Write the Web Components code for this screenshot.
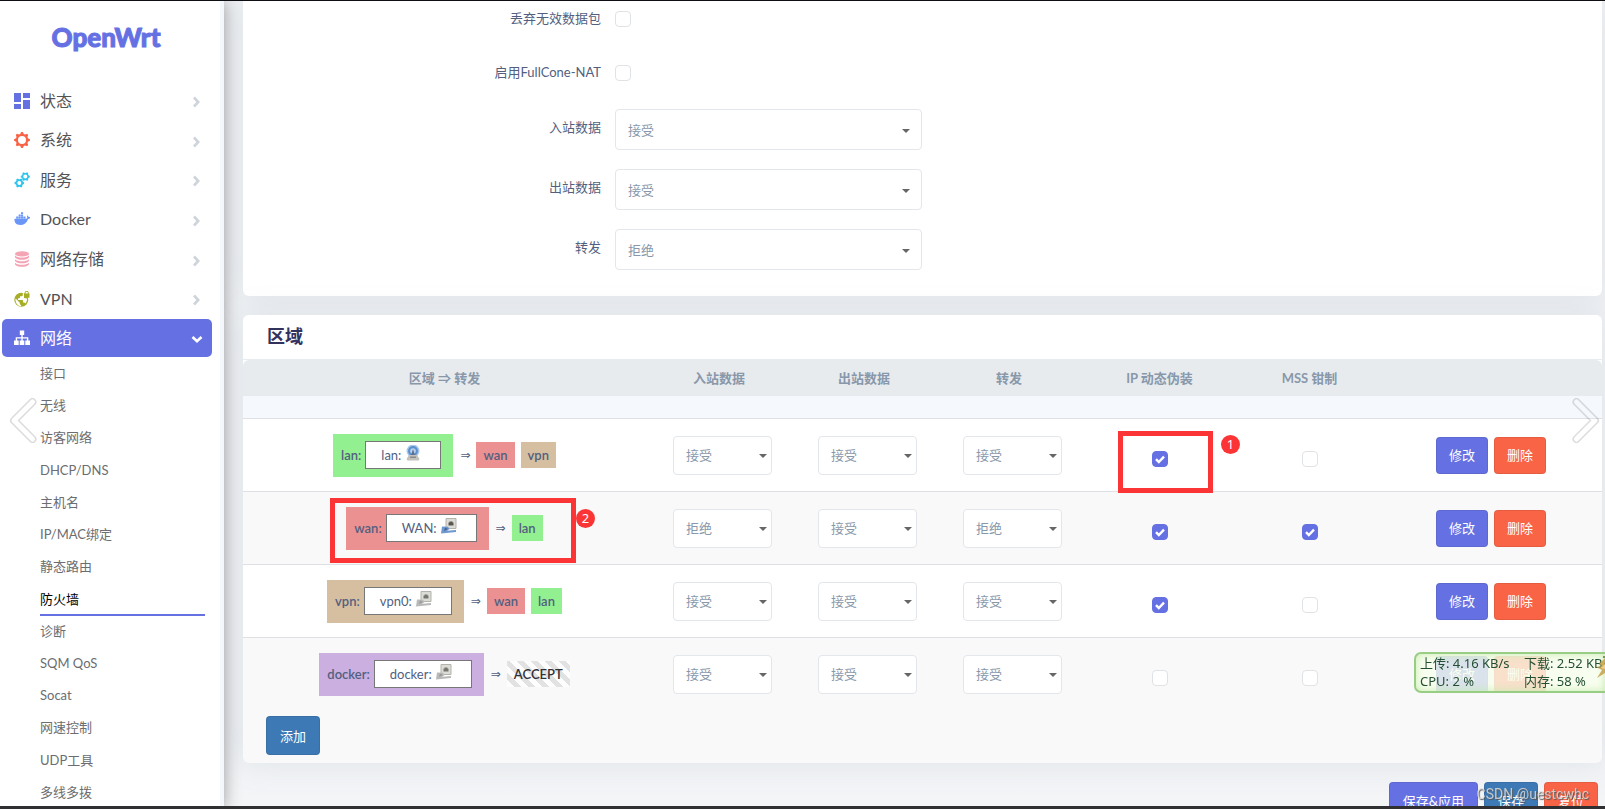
<!DOCTYPE html>
<html lang="zh-CN">
<head>
<meta charset="utf-8">
<meta name="viewport" content="width=device-width, initial-scale=1">
<title>OpenWrt - 防火墙</title>
<style>
  :root {
    --primary: #6571e3;
    --danger: #f96446;
    --info: #3c79b5;
    --text: #525f7f;
    --muted: #8898aa;
  }
  html, body { margin: 0; height: 100%; overflow: hidden; }
  body { font: 13px/20px Lato, "Noto Sans CJK SC", sans-serif; color: var(--text); }
</style>
</head>
<body>
<router-app></router-app>
<script>
const define = (name, render, setup) => customElements.define(name, class extends HTMLElement {
  connectedCallback() {
    if (this.shadowRoot) return;
    const root = this.attachShadow({ mode: 'open' });
    root.innerHTML = '<style>*{box-sizing:border-box}</style>' + render(this);
    if (setup) setup(this, root);
  }
});

const gear = (cx, cy, r, hole, teeth) => {
  let d = '';
  const n = teeth * 4, inner = r * 0.78;
  for (let i = 0; i < n; i++) {
    const a = (i - 0.5) * 2 * Math.PI / n;
    const rad = (i % 4 < 2) ? r : inner;
    d += (i ? 'L' : 'M') + (cx + rad * Math.cos(a)).toFixed(2) + ' ' + (cy + rad * Math.sin(a)).toFixed(2);
  }
  return d + `ZM${cx - hole} ${cy}a${hole} ${hole} 0 1 0 ${2 * hole} 0a${hole} ${hole} 0 1 0 ${-2 * hole} 0Z`;
};

const icons = {
  status: '<path fill="#6571e3" d="M0 0h7v9H0zM9 0h7v5H9zM0 11h7v5H0zM9 7h7v9H9z"/>',
  system: `<path fill="#f96446" fill-rule="evenodd" d="${gear(8, 8, 8, 4, 8)}"/>`,
  service: `<path fill="#2fc4ee" fill-rule="evenodd" d="${gear(5.3, 11, 4.8, 2, 6)}${gear(11.3, 4.6, 4.6, 2, 6)}"/>`,
  docker: '<path fill="#6a96f8" d="M2.2 5.6h2.1v1.9H2.200zM4.600 5.600h2.100v1.900H4.600zM7 5.600h2.100v1.900H7zM9.400 5.600h2.100v1.900H9.400zM4.600 3.400h2.100v1.900H4.600zM7 3.400h2.100v1.900H7zM7 1.200h2.100v1.900H7zM.5 7.800h11.600c.6-.1 1-.4 1.200-.9-.5-1-.4-1.900.3-2.700.7.600 1 1.200 1 1.900.7-.1 1.300 0 1.900.4-.4.900-1.200 1.400-2.400 1.400C12.700 11.900 10 14 6.200 14 2.300 14 .2 12 .5 7.800Z"/>',
  storage: '<g fill="#f3a4b5"><ellipse cx="8" cy="2.900" rx="7" ry="2.700"/><path d="M1 4.600c1.300 1.600 4 2 7 2s5.700-.4 7-2v1.800c-1 1.600-4 2.300-7 2.300s-6-.7-7-2.300zM1 8.200c1.300 1.600 4 2 7 2s5.700-.4 7-2V10c-1 1.600-4 2.300-7 2.300s-6-.7-7-2.300zM1 11.800c1.300 1.600 4 2 7 2s5.700-.4 7-2v1.700c-1 1.600-4 2.300-7 2.300s-6-.7-7-2.300z"/></g>',
  vpn: '<circle cx="7.300" cy="8.800" r="7" fill="#a7ae24"/><path fill="#fff" d="M1.600 7.600 5.800 11.700v1.200l1.200 1.400v1C3.500 15 .9 11.500 1.600 7.600zM8.800 2.200v1.700c0 .8-.7 1.300-1.400 1.300H6v1.400c0 .5-.3.700-.7.700H4v1.600h4.400c.4 0 .7.300.7.700v2h.8c.7 0 1.200.4 1.400 1 1.300-1.500 1.900-3 1.700-5.100L10 7V2.200z"/><path fill="#a7ae24" fill-rule="evenodd" d="M10.600 2.600V2a2.100 2.100 0 0 1 4.200 0v.6h.7v4.200H10V2.600zm.9 0h2.400V2a1.200 1.200 0 0 0-2.400 0z"/>',
  network: '<path fill="#fff" d="M5.800.5h4.400v4.400H8.700v2.300h5.600v3.300H16V15h-4.700v-4.500h1.600V8.600H8.700v1.900h1.600V15H5.700v-4.500h1.600V8.600H3.100v1.900h1.600V15H0v-4.500h1.700V7.200h5.600V4.900H5.800z"/>',
  wifi: '<circle cx="8" cy="6" r="6.500" fill="#a9c8ea"/><circle cx="8" cy="6" r="5" fill="#5c8fd0"/><circle cx="8" cy="6" r="2.800" fill="#b9d2ee"/><path fill="#5b6f91" d="M8 4l2.500 8h-5z"/><path fill="#c3c1bc" d="M1.500 14 4 10h8l2.500 4-1 1.500h-11z"/><path fill="#8a8a8d" d="M5 11.500h6V13H5z"/>',
  eth: '<path fill="#dcdcd6" stroke="#b3b2ac" d="M5 .5h10v10H5z"/><path fill="#58564f" d="M8.500 3.500h3v1h1V7.500H7.500v-3h1z"/><path fill="#6f97cf" d="m1 8.500 6 .2 1.500 2.300-2.500 1.700 9-.8v2L0 15.500z"/><path fill="#40648f" d="m4 9.500 3 1.500-4 2z"/>',
};
icons.ethoff = icons.eth.replace('#6f97cf', '#b9b9b9').replace('#40648f', '#9a9a9a').replace('#58564f', '#77756f');

define('ui-icon', el => `
  <style>:host{display:inline-block;width:16px;height:16px;flex:none}svg{display:block;width:100%;height:100%}</style>
  <svg viewBox="0 0 16 16" aria-hidden="true">${icons[el.getAttribute('name')]}</svg>`);

define('ui-button', el => `
  <style>
    :host{display:inline-block}
    button{display:block;font:inherit;color:#fff;background:var(--button-color,var(--primary));border:1px solid rgba(0,0,0,.08);
      border-radius:4px;padding:0 var(--button-pad,12px);height:var(--button-height,37px);cursor:pointer;white-space:nowrap}
    :host([kind=danger]) button{background:var(--danger)}
    :host([kind=info]) button{background:var(--info)}
  </style>
  <button type="button"><slot></slot></button>`);

define('ui-check', el => `
  <style>
    :host{display:inline-block;width:16px;height:16px}
    input{appearance:none;display:block;width:16px;height:16px;margin:0;border:1px solid #dfe2e6;border-radius:4px;background:#fff;cursor:pointer}
    input:checked{border-color:var(--primary);background:var(--primary) url("data:image/svg+xml,%3Csvg xmlns='http://www.w3.org/2000/svg' viewBox='0 0 14 14'%3E%3Cpath d='M3 7.200 5.800 10 11 4.600' fill='none' stroke='%23fff' stroke-width='2.400'/%3E%3C/svg%3E")}
  </style>
  <input type="checkbox" aria-label="${el.getAttribute('label')}" ${el.hasAttribute('checked') ? 'checked' : ''}>`);

define('ui-select', el => {
  const v = el.getAttribute('value');
  return `
  <style>
    :host{display:block;position:relative;height:var(--select-height,41px)}
    select{appearance:none;display:block;width:100%;height:100%;font:inherit;color:var(--muted);background:#fff;
      border:1px solid #e3e6ea;border-radius:4px;padding:0 24px 0 12px}
    :host::after{content:"";position:absolute;right:var(--arrow-right,12px);top:50%;margin-top:-1px;
      border:4px solid transparent;border-top-color:#666;border-bottom:0;pointer-events:none}
  </style>
  <select aria-label="${el.getAttribute('label')}">${['接受', '拒绝'].map(o => `<option${o === v ? ' selected' : ''}>${o}</option>`).join('')}</select>`;
});

define('form-row', el => `
  <style>
    :host{display:grid;grid-template-columns:358fr 987fr;column-gap:14px}
    label{text-align:right;cursor:pointer}
    ::slotted(ui-select){width:307px;--arrow-right:12px}
    ::slotted(ui-check){margin-top:3px}
    :host([tall]) label{padding-top:8px}
  </style>
  <label>${el.getAttribute('label')}</label><slot></slot>`,
  (el, root) => root.querySelector('label').addEventListener('click', () =>
    el.firstElementChild.shadowRoot.querySelector('input,select').focus()));

define('ui-card', () => `
  <style>
    :host{display:block;background:#fff;border-radius:6px;box-shadow:0 0 32px rgba(136,152,170,.15)}
  </style><slot></slot>`);

define('menu-item', el => `
  <style>
    :host{display:grid}
    a{display:flex;align-items:center;height:38px;align-self:center;margin:0 8px 0 2px;padding:0 10px 0 12px;border-radius:5px;
      color:#515357;text-decoration:none;font-size:16px}
    span{flex:1;margin-left:10px}
    svg{width:10px;height:12px;margin-top:3px}
    :host([active]) a{background:var(--primary);color:#fff}
    :host([active]) svg{transform:rotate(90deg)}
  </style>
  <a href="#"><ui-icon name="${el.getAttribute('icon')}"></ui-icon><span><slot></slot></span>
  <svg viewBox="0 0 10 12" aria-hidden="true"><path d="M2 1.500 6.200 6 2 10.500" fill="none" stroke="${el.hasAttribute('active') ? '#fff' : '#ced4da'}" stroke-width="2.600"/></svg></a>`);

define('side-bar', () => `
  <style>
    :host{display:block;width:224px;height:100vh;overflow:hidden;background:#fff;border-right:4px solid #f4f7fb;
      box-shadow:0 0 16px rgba(0,0,0,.36);position:relative;z-index:2;flex:none}
    .logo{display:block;text-align:center;width:212px;padding-top:19px;height:80px;font:900 26px/34px Lato,sans-serif;color:var(--primary);text-decoration:none;-webkit-text-stroke:1px var(--primary)}
    nav{display:grid;grid-auto-rows:1fr;height:277px}
    ul{display:grid;grid-auto-rows:1fr;height:451px;list-style:none;margin:0;padding:0 15px 0 40px}
    li a{display:block;height:32px;line-height:31px;color:#6b6d70;text-decoration:none}
    li a[aria-current]{color:#000;border-bottom:2px solid var(--primary)}
  </style>
  <a class="logo" href="#">OpenWrt</a>
  <nav>
    <menu-item icon="status">状态</menu-item>
    <menu-item icon="system">系统</menu-item>
    <menu-item icon="service">服务</menu-item>
    <menu-item icon="docker">Docker</menu-item>
    <menu-item icon="storage">网络存储</menu-item>
    <menu-item icon="vpn">VPN</menu-item>
    <menu-item icon="network" active>网络</menu-item>
  </nav>
  <ul>${['接口', '无线', '访客网络', 'DHCP/DNS', '主机名', 'IP/MAC绑定', '静态路由', '防火墙', '诊断', 'SQM QoS', 'Socat', '网速控制', 'UDP工具', '多线多拨']
    .map(t => `<li><a href="#"${t === '防火墙' ? ' aria-current="page"' : ''}>${t}</a></li>`).join('')}</ul>`);

const zoneColors = { lan: '#92f091', wan: '#ec9192', vpn: '#d6bfa0', docker: '#caafe0' };

define('zone-chain', el => {
  const name = el.getAttribute('name');
  const targets = el.getAttribute('to').split(' ');
  return `
  <style>
    :host{display:flex;justify-content:center;align-items:center;white-space:nowrap;padding-right:1px}
    .zone{display:flex;align-items:center;height:43px;padding:0 12px 0 8px}
    .net{display:flex;align-items:center;height:28px;margin-left:4px;padding:0 19px 0 15px;background:#fff;border:1px solid #777;font-weight:400}
    .net ui-icon{margin:-5px 0 0 4px}
    b{font-weight:600}
    .arrow{margin:0 6px 0 7px;font-family:"DejaVu Sans",sans-serif;font-size:12px}
    .badge{height:26px;line-height:26px;padding:0 7px}
    .badge + .badge{margin-left:6px}
    .accept{color:#32323a;background:repeating-linear-gradient(45deg,#fdfdfd 0 5px,#e2e2e2 5px 10px)}
  </style>
  <div class="zone" style="background:${zoneColors[name]}"><b>${name}:</b><div class="net">${el.getAttribute('net')}:<ui-icon name="${el.getAttribute('icon')}"></ui-icon></div></div>
  <span class="arrow">⇒</span>
  ${targets.map(t => t === 'ACCEPT' ? '<b class="badge accept">ACCEPT</b>' : `<b class="badge" style="background:${zoneColors[t]}">${t}</b>`).join('')}`;
});

const zones = [
  { name: 'lan', net: 'lan', icon: 'wifi', to: 'wan vpn', policy: ['接受', '接受', '接受'], masq: true, mss: false },
  { name: 'wan', net: 'WAN', icon: 'eth', to: 'lan', policy: ['拒绝', '接受', '拒绝'], masq: true, mss: true },
  { name: 'vpn', net: 'vpn0', icon: 'ethoff', to: 'wan lan', policy: ['接受', '接受', '接受'], masq: true, mss: false },
  { name: 'docker', net: 'docker', icon: 'ethoff', to: 'ACCEPT', policy: ['接受', '接受', '接受'], masq: false, mss: false },
];
const policyNames = ['入站数据', '出站数据', '转发'];

define('zone-table', () => `
  <style>
    :host{display:block}
    table{width:100%;table-layout:fixed;border-collapse:separate;border-spacing:0;background:#fff}
    th{height:36px;padding:0 1px 0 0;background:#e8ebee;color:var(--muted);font-weight:700}
    th:first-child{border-top-left-radius:6px}
    th:last-child{border-top-right-radius:6px}
    td{height:73px;padding:0;text-align:center;border-top:1px solid #dee0e3;position:relative}
    tr:nth-child(odd) td{background:#f9f9f9}
    tr:nth-child(even) td{background:#fff}
    tbody tr.gap td{height:22px;background:#f5f9fd;border:0}
    ui-select{width:99px;margin:0 auto;text-align:left;--select-height:39px;--arrow-right:5px}
    .policy{padding-left:6px}
    .tick{padding-top:5px}
    ui-check{vertical-align:middle}
    .actions{display:flex;justify-content:center;gap:6px;padding-right:2px}
    .frame{position:absolute;border:5px solid #fb3536;pointer-events:none;z-index:1}
    .mark{position:absolute;width:19px;height:19px;border-radius:50%;background:#fb3536;color:#fff;font:13px/19px "Noto Sans",sans-serif;z-index:1}
    .f1{left:36px;width:95px;top:12px;height:62px}
    .m1{left:139px;top:16px}
    .f2{left:87px;width:246px;top:6px;height:65px}
    .m2{left:333px;top:17px}
  </style>
  <table>
    <colgroup><col><col style="width:145px"><col style="width:145px"><col style="width:145px"><col style="width:156px"><col style="width:144px"><col style="width:220px"></colgroup>
    <thead><tr><th>区域 ⇒ 转发</th><th>入站数据</th><th>出站数据</th><th>转发</th><th>IP 动态伪装</th><th>MSS 钳制</th><th></th></tr></thead>
    <tbody>
      <tr class="gap"><td colspan="7"></td></tr>
      ${zones.map((z, i) => `<tr>
        <td><zone-chain name="${z.name}" net="${z.net}" icon="${z.icon}" to="${z.to}"></zone-chain>${i === 1 ? '<div class="frame f2"></div><div class="mark m2">2</div>' : ''}</td>
        ${z.policy.map((p, k) => `<td class="policy"><ui-select label="${z.name} ${policyNames[k]}" value="${p}"></ui-select></td>`).join('')}
        <td class="tick"><ui-check label="${z.name} IP 动态伪装"${z.masq ? ' checked' : ''}></ui-check>${i === 0 ? '<div class="frame f1"></div><div class="mark m1">1</div>' : ''}</td>
        <td class="tick"><ui-check label="${z.name} MSS 钳制"${z.mss ? ' checked' : ''}></ui-check></td>
        <td><div class="actions"><ui-button>修改</ui-button><ui-button kind="danger">删除</ui-button></div></td>
      </tr>`).join('')}
    </tbody>
  </table>`);

define('status-widget', () => `
  <style>
    :host{position:fixed;right:0;top:652px;width:191px;height:41px;overflow:hidden;z-index:4;border:2px solid #97ce83;border-right:0;
      border-radius:7px 0 0 7px;background:rgba(247,255,236,.8);box-shadow:inset 0 0 8px #c6ebaf;color:#234f32;
      font:13px/18px "Noto Sans","Noto Sans CJK SC",sans-serif;padding:0 0 0 4px;white-space:nowrap}
    div{display:grid;grid-template-columns:104px max-content}
    svg{position:absolute;right:0;top:2px;width:9px;height:28px}
  </style>
  <div><span>上传: 4.16 KB/s</span><span>下载: 2.52 KB/s</span><span>CPU: 2 %</span><span>内存: 58 %</span></div>
  <svg viewBox="0 0 9 28" aria-hidden="true"><path d="M9 2 3 8l3 2-6 1 6 3-5 8 8-5z" fill="#c8a04c" fill-opacity=".85"/><path d="M9 8 5 12l4 1z" fill="#ecd28f"/><path d="M7 0h2v2H7z" fill="#6f9d4f"/></svg>`);

define('page-arrow', () => `
  <style>
    :host{position:fixed;top:398px;left:9px;width:28px;height:45px;z-index:5}
    :host([next]){left:auto;right:5px;transform:scaleX(-1)}
    button{display:block;width:100%;height:100%;padding:0;border:0;background:none}
    svg{display:block}
  </style>
  <button type="button" aria-label="翻页"><svg width="28" height="45" viewBox="0 0 28 45">
    <mask id="m" maskUnits="userSpaceOnUse" x="0" y="0" width="28" height="45">
      <path d="M23.500 4 5 22.500 23.500 41" fill="none" stroke="#fff" stroke-width="8" stroke-linecap="round" stroke-linejoin="round"/>
      <path d="M23.500 4 5 22.500 23.500 41" fill="none" stroke="#000" stroke-width="5" stroke-linecap="round" stroke-linejoin="round"/>
    </mask><path mask="url(#m)" fill="#000" fill-opacity=".14" d="M0 0h28v45H0z"/></svg></button>`);

define('router-app', () => `
  <style>
    :host{display:flex;height:100vh;overflow:hidden;background:#f2f4f6;border-top:1px solid #0d0d12}
    main{flex:1;min-width:0;padding:0 3px 0 19px;background:linear-gradient(#eff1f4 0 740px,#f4f5f7 800px)}
    .general{border-top-left-radius:0;border-top-right-radius:0;padding:7px 0 26px;display:grid}
    .general form-row:nth-child(1){height:54px}
    .general form-row:nth-child(2){height:47px}
    .general form-row:nth-child(n+3){height:60px}
    .general form-row:last-child{height:41px}
    .zones{margin-top:19px;background:#f9f9f9}
    h2{margin:0;padding:0 24px;height:45px;font-size:18px;line-height:42px;font-weight:700;color:#32325d;background:#fff;border-radius:6px 6px 0 0;border-bottom:1px solid #e9ecef}
    .add{display:block;padding:6px 23px 8px;height:53px;--button-height:39px;--button-pad:13px}
    footer{display:flex;justify-content:flex-end;gap:6px;padding:19px 4px 0;--button-height:38px;--button-pad:13px}
    .bar{position:fixed;left:0;right:0;bottom:0;height:3px;background:#303033;z-index:6}
    .water{position:fixed;right:16px;bottom:5px;z-index:5;font:14px/20px Roboto,sans-serif;color:rgba(225,226,228,.8);text-shadow:1px 1px 1px #555}
  </style>
  <side-bar></side-bar>
  <main>
    <ui-card class="general">
      <form-row label="丢弃无效数据包"><ui-check label="丢弃无效数据包"></ui-check></form-row>
      <form-row label="启用FullCone-NAT"><ui-check label="启用FullCone-NAT"></ui-check></form-row>
      <form-row tall label="入站数据"><ui-select label="入站数据" value="接受"></ui-select></form-row>
      <form-row tall label="出站数据"><ui-select label="出站数据" value="接受"></ui-select></form-row>
      <form-row tall label="转发"><ui-select label="转发" value="拒绝"></ui-select></form-row>
    </ui-card>
    <ui-card class="zones">
      <h2>区域</h2>
      <zone-table></zone-table>
      <div class="add"><ui-button kind="info">添加</ui-button></div>
    </ui-card>
    <footer><ui-button>保存&amp;应用</ui-button><ui-button kind="info">保存</ui-button><ui-button kind="danger">复位</ui-button></footer>
  </main>
  <status-widget></status-widget>
  <page-arrow></page-arrow><page-arrow next></page-arrow>
  <div class="water">CSDN @uestcwhc</div>
  <div class="bar"></div>`);
</script>
</body>
</html>
